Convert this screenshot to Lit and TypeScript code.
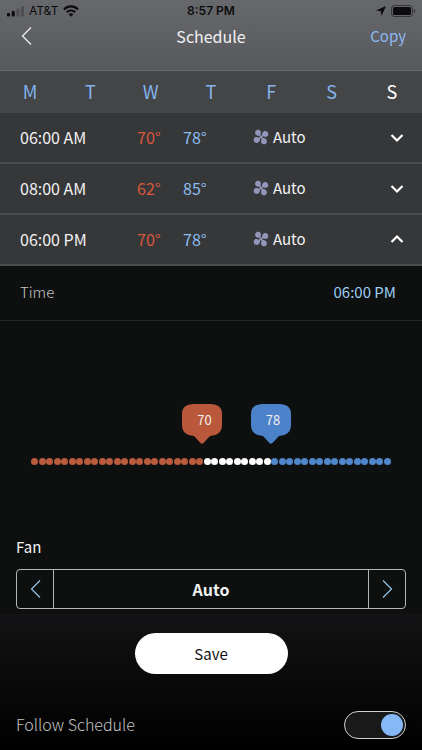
import { LitElement, html, css, svg } from "lit";
import { customElement, property, state } from "lit/decorators.js";
import { classMap } from "lit/directives/class-map.js";
import { styleMap } from "lit/directives/style-map.js";

interface Entry {
  time: string;
  heat: number;
  cool: number;
  fan: string;
}

const DAYS = [
  ["M", "Monday"],
  ["T", "Tuesday"],
  ["W", "Wednesday"],
  ["T", "Thursday"],
  ["F", "Friday"],
  ["S", "Saturday"],
  ["S", "Sunday"],
];

const ENTRIES: Entry[] = [
  { time: "06:00 AM", heat: 70, cool: 78, fan: "Auto" },
  { time: "08:00 AM", heat: 62, cool: 85, fan: "Auto" },
  { time: "06:00 PM", heat: 70, cool: 78, fan: "Auto" },
];

const MIN = 50;
const MAX = 92;
const DOTS = 48;
const FAN_MODES = ["Auto", "On", "Circulate"];

const buttonReset = css`
  * {
    box-sizing: border-box;
  }
  button {
    margin: 0;
    padding: 0;
    border: 0;
    background: none;
    color: inherit;
    font: inherit;
    cursor: pointer;
  }
  svg {
    display: block;
  }
`;

const angle = (dir: "left" | "right") => html`
  <svg width="11" height="20" viewBox="0 0 11 20" fill="none" stroke="currentColor" stroke-width="1.2" aria-hidden="true">
    <path d=${dir === "left" ? "M10 1.5 L1.5 10 L10 18.5" : "M1 1.5 L9.5 10 L1 18.5"} />
  </svg>
`;

@customElement("status-bar")
export class StatusBar extends LitElement {
  static styles = css`
    :host {
      display: grid;
      grid-template-columns: 1fr auto 1fr;
      align-items: center;
      height: 21px;
      padding: 0 6px;
      color: #0c0c0e;
      font: 500 12px/21px Inter, "Liberation Sans", sans-serif;
    }
    .side {
      display: flex;
      align-items: center;
      gap: 5px;
    }
    .end {
      justify-content: flex-end;
    }
    .carrier {
      font-weight: 400;
    }
    .clock {
      font-weight: 600;
    }
    svg {
      display: block;
    }
  `;

  render() {
    return html`
      <div class="side">
        <svg width="18" height="12" viewBox="0 0 18 12" fill="currentColor" aria-label="Signal">
          <rect x="1" y="8" width="3" height="3.5" rx="1" />
          <rect x="5.7" y="6" width="3" height="5.5" rx="1" />
          <rect x="10.4" y="3.5" width="3" height="8" rx="1" opacity=".25" />
          <rect x="15" y="1" width="3" height="10.5" rx="1" opacity=".25" />
        </svg>
        <span class="carrier">AT&amp;T</span>
        <svg width="16" height="12" viewBox="0 0 16 12" fill="none" stroke="currentColor" stroke-width="2.1" aria-label="Wi-Fi">
          <path d="M1 4.4 C5 .4 11 .4 15 4.4" />
          <path d="M3.8 7.2 C6.2 4.9 9.8 4.9 12.2 7.2" />
          <path d="M5.6 9.2 C7 7.9 9 7.9 10.4 9.2 L8 11.7 Z" fill="currentColor" stroke="none" />
        </svg>
      </div>
      <span class="clock">8:57 PM</span>
      <div class="side end">
        <svg width="10" height="10" viewBox="0 0 10 10" fill="currentColor" aria-label="Location">
          <path d="M10 0 L5.5 10 L4.8 5.2 L0 4.5 Z" />
        </svg>
        <svg width="25" height="12" viewBox="0 0 25 12" aria-label="Battery">
          <rect x=".5" y=".5" width="21" height="11" rx="3" fill="none" stroke="currentColor" opacity=".55" />
          <rect x="2" y="2" width="18" height="8" rx="1.6" fill="currentColor" />
          <path d="M23 4 C24.6 4.4 24.6 7.6 23 8 Z" fill="currentColor" opacity=".55" />
        </svg>
      </div>
    `;
  }
}

@customElement("schedule-row")
export class ScheduleRow extends LitElement {
  @property({ attribute: false }) entry!: Entry;
  @property({ type: Boolean }) open = false;

  static styles = [
    buttonReset,
    css`
      :host {
        display: block;
        border-bottom: 2px solid #4b4c4e;
        background: #363739;
      }
      .row {
        display: grid;
        grid-template-columns: 117fr 46fr 70fr 136fr 16px;
        align-items: center;
        width: 100%;
        height: 49px;
        padding: 0 17px 2px 20px;
        text-align: left;
      }
      .heat {
        color: #d8583c;
      }
      .cool {
        color: #8bbdf0;
      }
      .fan {
        display: flex;
        align-items: center;
        gap: 4px;
        font-size: 15px;
      }
      .blades {
        color: #9296ba;
      }
    `,
  ];

  render() {
    const { time, heat, cool, fan } = this.entry;
    const blade = "M8 8 C7.2 6.9 5.6 7.4 4 6.6 C2.2 5.7 1.7 3.8 2.4 2.3 C3.1 .8 4.8 .4 6.2 .9 C7.8 1.5 8.1 2.9 7.8 4.3 C7.6 5.5 7.4 6.6 8 8 Z";
    return html`
      <button class="row" aria-expanded=${this.open ? "true" : "false"}>
        <span>${time}</span>
        <span class="heat">${heat}°</span>
        <span class="cool">${cool}°</span>
        <span class="fan">
          <svg class="blades" width="16" height="16" viewBox="0 0 16 16" fill="currentColor" aria-hidden="true">
            ${[0, 90, 180, 270].map((a) => svg`<path d=${blade} transform="rotate(${a} 8 8)" />`)}
            <circle cx="8" cy="8" r="1.3" />
          </svg>
          ${fan}
        </span>
        <svg width="16" height="16" viewBox="0 0 16 16" fill="none" stroke="#fff" stroke-width="2.2" aria-hidden="true">
          <path d=${this.open ? "M2.5 11 L8 5.5 L13.5 11" : "M2.5 6 L8 11.5 L13.5 6"} />
        </svg>
      </button>
    `;
  }
}

@customElement("range-slider")
export class RangeSlider extends LitElement {
  @property({ type: Number }) low = 70;
  @property({ type: Number }) high = 78;

  static styles = css`
    :host {
      display: block;
      position: relative;
      padding-top: 54px;
    }
    .dots {
      display: flex;
      justify-content: space-between;
    }
    .dot {
      width: 7px;
      height: 7px;
      border-radius: 50%;
      background: #fff;
    }
    .dot.heat {
      background: #bb5c3f;
    }
    .dot.cool {
      background: #4f86cc;
    }
    .bubble {
      position: absolute;
      z-index: 0;
      top: 0;
      box-sizing: border-box;
      width: 40px;
      height: 40px;
      margin-left: -20px;
      padding-left: 4px;
      color: #f3eeee;
      font-size: 13px;
      line-height: 32px;
      text-align: center;
    }
    .shape {
      position: absolute;
      inset: 0;
      z-index: -1;
    }
    .heat .shape {
      fill: #b9583a;
    }
    .cool .shape {
      fill: #4c82ca;
    }
    input {
      position: absolute;
      bottom: 0;
      left: 0;
      width: 100%;
      height: 8px;
      margin: 0;
      opacity: 0;
      pointer-events: none;
    }
    input::-webkit-slider-thumb {
      pointer-events: auto;
    }
  `;

  private bubble(kind: string, value: number) {
    return html`
      <output class="bubble ${kind}" style=${styleMap({ left: `${((value - MIN) / (MAX - MIN)) * 100}%` })}>
        <svg class="shape" width="40" height="40" viewBox="0 0 40 40" aria-hidden="true">
          <path d="M12 0 H28 Q40 0 40 10 V21 Q40 31 28 32 L21.5 39 Q20 40.5 18.5 39 L12 32 Q0 31 0 21 V10 Q0 0 12 0 Z" />
        </svg>
        ${value}
      </output>
    `;
  }

  render() {
    const at = (v: number) => ((v - MIN) / (MAX - MIN)) * (DOTS - 1);
    return html`
      ${this.bubble("heat", this.low)} ${this.bubble("cool", this.high)}
      <div class="dots">
        ${Array.from(
          { length: DOTS },
          (_, i) => html`<span class=${classMap({ dot: true, heat: i <= at(this.low), cool: i > at(this.high) })}></span>`
        )}
      </div>
      <input type="range" aria-label="Heat to" min=${MIN} max=${MAX} .value=${String(this.low)}
        @input=${(e: Event) => (this.low = Math.min(+(e.target as HTMLInputElement).value, this.high))} />
      <input type="range" aria-label="Cool to" min=${MIN} max=${MAX} .value=${String(this.high)}
        @input=${(e: Event) => (this.high = Math.max(+(e.target as HTMLInputElement).value, this.low))} />
    `;
  }
}

@customElement("app-root")
export class AppRoot extends LitElement {
  @state() private day = 6;
  @state() private openRow = 2;
  @state() private mode = 0;

  static styles = [
    buttonReset,
    css`
      :host {
        display: flex;
        flex-direction: column;
        min-height: 100vh;
        background: #0e100f;
        color: #f2f2f2;
        font: 400 16px/24px "Noto Sans CJK SC", "Noto Sans", sans-serif;
      }
      .top {
        background: linear-gradient(#67686c, #58595c);
        border-bottom: 1px solid #67686a;
      }
      .nav {
        display: grid;
        grid-template-columns: 1fr auto 1fr;
        align-items: center;
        height: 49px;
        padding: 0 16px 20px;
      }
      .back {
        justify-self: start;
        padding-left: 5px;
      }
      .title {
        margin: 0;
        font-size: 16px;
        font-weight: 400;
      }
      .copy {
        justify-self: end;
        color: #8cbaf2;
        font-size: 15px;
      }
      .days {
        display: grid;
        grid-template-columns: repeat(7, 1fr);
        height: 42px;
        background: #444547;
        color: #83b3ec;
        font-size: 18px;
      }
      .day {
        padding-bottom: 2px;
      }
      .day.on {
        color: #fff;
      }
      .time {
        display: flex;
        justify-content: space-between;
        align-items: center;
        height: 55px;
        padding: 0 26px 0 20px;
        border-bottom: 1px solid #272929;
        font-size: 15px;
      }
      .soft {
        padding-bottom: 2px;
        color: #c4c4c4;
        font-weight: 300;
      }
      .value {
        padding-bottom: 2px;
        color: #9ccdf4;
      }
      .range {
        padding: 83px 31px 70px;
      }
      .fan {
        padding: 0 16px 5px;
      }
      .label {
        font-size: 15px;
      }
      .picker {
        display: grid;
        grid-template-columns: 36px 1fr 36px;
        height: 40px;
        margin-top: 10px;
        border: 1px solid #b5b7b7;
        border-radius: 4px;
      }
      .step {
        display: grid;
        place-items: center;
        color: #93c4ea;
      }
      .mode {
        border: solid #b5b7b7;
        border-width: 0 1px;
        font-weight: 700;
        line-height: 38px;
        text-align: center;
      }
      .bottom {
        flex: 1;
        display: flex;
        flex-direction: column;
        align-items: center;
        gap: 37px;
        padding: 19px 16px 11px;
        background: linear-gradient(#131315, #000);
      }
      .save {
        width: 153px;
        height: 41px;
        border-radius: 21px;
        background: #fff;
        color: #111;
        font-size: 15px;
      }
      .follow {
        display: flex;
        justify-content: space-between;
        align-items: center;
        align-self: stretch;
      }
      .switch {
        appearance: none;
        display: flex;
        align-items: center;
        width: 62px;
        height: 28px;
        margin: 0;
        padding: 2px;
        border: 1px solid #d0d0d0;
        border-radius: 14px;
        background: #19191a;
      }
      .switch::before {
        content: "";
        width: 22px;
        height: 22px;
        border-radius: 50%;
        background: #86b8f8;
      }
      .switch:checked {
        justify-content: flex-end;
      }
    `,
  ];

  private step(by: number) {
    this.mode = (this.mode + by + FAN_MODES.length) % FAN_MODES.length;
  }

  render() {
    return html`
      <header class="top">
        <status-bar></status-bar>
        <nav class="nav">
          <button class="back" aria-label="Back">${angle("left")}</button>
          <h1 class="title">Schedule</h1>
          <button class="copy">Copy</button>
        </nav>
      </header>
      <div class="days">
        ${DAYS.map(
          ([letter, name], i) => html`
            <button class=${classMap({ day: true, on: i === this.day })} aria-label=${name} @click=${() => (this.day = i)}>
              ${letter}
            </button>
          `
        )}
      </div>
      ${ENTRIES.map(
        (entry, i) => html`
          <schedule-row .entry=${entry} ?open=${i === this.openRow} @click=${() => (this.openRow = i)}></schedule-row>
        `
      )}
      <div class="time">
        <span class="soft">Time</span>
        <button class="value">06:00 PM</button>
      </div>
      <div class="range"><range-slider .low=${70} .high=${78}></range-slider></div>
      <section class="fan">
        <div class="label">Fan</div>
        <div class="picker">
          <button class="step" aria-label="Previous fan mode" @click=${() => this.step(-1)}>${angle("left")}</button>
          <div class="mode">${FAN_MODES[this.mode]}</div>
          <button class="step" aria-label="Next fan mode" @click=${() => this.step(1)}>${angle("right")}</button>
        </div>
      </section>
      <footer class="bottom">
        <button class="save">Save</button>
        <label class="follow">
          <span class="soft">Follow Schedule</span>
          <input class="switch" type="checkbox" role="switch" checked />
        </label>
      </footer>
    `;
  }
}
